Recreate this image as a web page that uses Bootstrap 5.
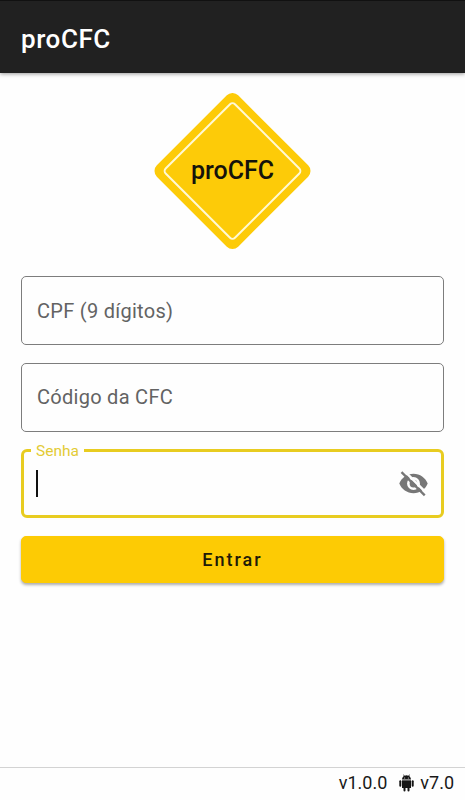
<!DOCTYPE html>
<html lang="pt-BR">
<head>
<meta charset="utf-8">
<meta name="viewport" content="width=device-width, initial-scale=1">
<title>proCFC</title>
<link href="https://cdn.jsdelivr.net/npm/bootstrap@5.3.0/dist/css/bootstrap.min.css" rel="stylesheet">
<style>
  body { font-family: Roboto, sans-serif; height: 800px; background: #fefefe; overflow: hidden; }
  .app-bar { height: 73px; background: #212121; border-top: 1px solid #111; box-shadow: 0 1px 4px rgba(0,0,0,.4); padding: 3px 21px 0; }
  .app-title { color: #fff; font-size: 26px; font-weight: 500; letter-spacing: .55px; line-height: 30px; }
  .logo-sign { width: 157px; height: 157px; }
  .login-form { padding: 0 21px; margin-top: 26px; gap: 17.6px; }
  .field-box { height: 69px; border: 1px solid #7d7d7d; border-radius: 5px; padding: 0 15px; font-size: 20px; letter-spacing: .28px; color: #222; box-shadow: none !important; background: #fefefe; }
  .field-box::placeholder { color: #636363; opacity: 1; }
  .field-active { border: 3px solid #e8cc20; border-radius: 6px; padding: 0 12px; }
  .field-tag { top: -10px; left: 7px; padding: 0 5px; font-size: 15.500px; line-height: 18px; color: #e3cb35; background: #fefefe; letter-spacing: 0; }
  .caret { width: 2px; height: 27px; background: #111; }
  .eye { width: 31px; height: 31px; }
  .btn-enter { --bs-btn-bg: #fdcb04; --bs-btn-color: #201a08; --bs-btn-border-color: #fdcb04; height: 47px; font-size: 18px; font-weight: 500; letter-spacing: 2px; border-radius: 5px; box-shadow: 0 2px 3px rgba(0,0,0,.32); padding: 0; }
  .version-bar { height: 33px; border-top: 1px solid #d3d3d3; font-size: 18px; color: #181818; padding: 0 11px 3px 0; }
  .droid { width: 15px; height: 18px; margin: 0 6px 0 12px; }
</style>
</head>
<body class="d-flex flex-column">
<header class="app-bar d-flex align-items-center flex-shrink-0">
  <h1 class="app-title mb-0">proCFC</h1>
</header>
<main class="flex-grow-1">
  <div class="d-flex justify-content-center pt-3 mt-1">
    <svg class="logo-sign" viewBox="0 0 157 157" role="img" aria-label="proCFC">
      <rect x="21" y="20.500" width="115" height="115" rx="8" fill="#fdcb08" transform="rotate(45 78.500 78)"/>
      <rect x="29.500" y="29" width="98" height="98" rx="3.500" fill="none" stroke="#fff9d5" stroke-width="2" transform="rotate(45 78.500 78)"/>
      <text x="78.500" y="85.500" text-anchor="middle" textLength="83" lengthAdjust="spacing" font-family="Roboto, sans-serif" font-size="25" font-weight="500" fill="#15130b">proCFC</text>
    </svg>
  </div>
  <form class="login-form d-flex flex-column">
    <input class="form-control field-box" type="text" placeholder="CPF (9 dígitos)" aria-label="CPF">
    <input class="form-control field-box" type="text" placeholder="Código da CFC" aria-label="Código da CFC">
    <div class="field-box field-active position-relative d-flex align-items-center justify-content-between">
      <span class="field-tag position-absolute">Senha</span>
      <span class="caret"></span>
      <svg class="eye" viewBox="0 0 24 24">
        <path fill="#777" fill-rule="evenodd" d="M12 4.500C7 4.500 2.730 7.610 1 12c1.730 4.390 6 7.500 11 7.500s9.270-3.110 11-7.500c-1.730-4.390-6-7.500-11-7.500zM12 17a5 5 0 1 1 0-10 5 5 0 0 1 0 10zM12 9a3 3 0 1 0 0 6 3 3 0 0 0 0-6z"/>
        <path stroke="#fefefe" stroke-width="2" d="M4.300 1.700 22.500 19.900"/>
        <path stroke="#777" stroke-width="1.800" d="M2.700 3.200 20.700 21.200"/>
      </svg>
    </div>
    <button class="btn btn-enter w-100" type="button">Entrar</button>
  </form>
</main>
<footer class="version-bar d-flex align-items-center justify-content-end flex-shrink-0">
  <span>v1.0.0</span>
  <svg class="droid" viewBox="0 0 15 18" fill="#151515">
    <path d="M3 5.600C3.100 4 3.800 2.800 5 2.100L4 .8l.5-.4 1.200 1.300a5 5 0 0 1 3.600 0L10.500.4l.5.4-1 1.300c1.200.7 1.900 1.900 2 3.500z"/>
    <path d="M3 6.300h9V14H3z"/>
    <rect x=".3" y="6.200" width="2" height="6.500" rx="1"/>
    <rect x="12.700" y="6.200" width="2" height="6.500" rx="1"/>
    <rect x="4.500" y="12" width="2" height="5.500" rx="1"/>
    <rect x="8.500" y="12" width="2" height="5.500" rx="1"/>
    <circle cx="5.700" cy="4" r=".5" fill="#fff"/><circle cx="9.300" cy="4" r=".5" fill="#fff"/>
  </svg>
  <span>v7.0</span>
</footer>
<script src="https://cdn.jsdelivr.net/npm/bootstrap@5.3.0/dist/js/bootstrap.bundle.min.js"></script>
</body>
</html>
